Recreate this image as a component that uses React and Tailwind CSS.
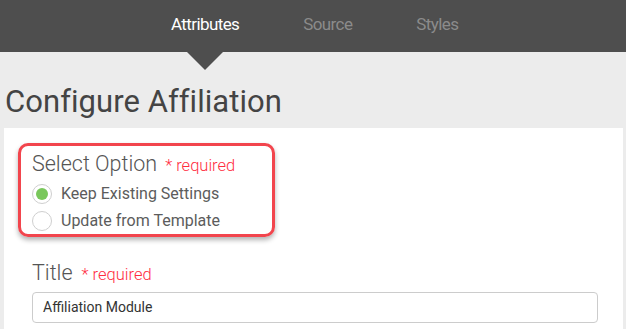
import React from "react";

const font = { fontFamily: "Roboto, 'Liberation Sans', sans-serif" };

const Radio = ({ checked, label }) => (
  <div className="flex items-center h-[27px]">
    <span className="flex h-[20px] w-[20px] items-center justify-center rounded-full border border-[#cfcfcf] bg-white">
      {checked && <span className="h-[12px] w-[12px] rounded-full bg-[#79c75b]" />}
    </span>
    <span className="ml-[9px] text-[16px] text-[#5c5c5c]">{label}</span>
  </div>
);

const App = () => {
  return (
    <div className="h-[329px] w-full overflow-hidden bg-[#ececec]" style={font}>
      <div className="relative h-[52px] bg-[#4e4e4e]">
        <nav className="flex h-full items-center gap-[64px] pl-[171px] pb-[2px] text-[17px] tracking-[-0.6px]">
          <span className="text-white">Attributes</span>
          <span className="text-[#8b8b8b]">Source</span>
          <span className="text-[#8b8b8b]">Styles</span>
        </nav>
        <div className="absolute left-[187px] top-[52px] h-0 w-0 border-l-[18px] border-r-[18px] border-t-[18px] border-l-transparent border-r-transparent border-t-[#4e4e4e]" />
      </div>

      <h1 className="pl-[5px] pt-[34px] text-[31px] leading-none font-normal tracking-[0.05px] text-[#444]">
        Configure Affiliation
      </h1>

      <div className="mt-[11px] ml-[4px] mr-[3px] h-[300px] bg-white pt-[15px]">
        <div className="ml-[14px] h-[94px] w-[257px] rounded-[10px] border-[3px] border-[#f2454d] pl-[11px] pt-[2px] shadow-[0_3px_5px_rgba(0,0,0,0.3)]">
          <div className="flex items-baseline">
            <span className="text-[21.5px] font-light text-[#555]">Select Option</span>
            <span className="ml-[8px] text-[16.5px] font-light text-[#ff2d3f]">* required</span>
          </div>
          <div>
            <Radio checked label="Keep Existing Settings" />
            <Radio label="Update from Template" />
          </div>
        </div>

        <div className="ml-[28px] mr-[25px] mt-[20px]">
          <div className="flex items-baseline">
            <span className="text-[21.5px] font-light text-[#555]">Title</span>
            <span className="ml-[9px] text-[16.5px] font-light text-[#ff2d3f]">* required</span>
          </div>
          <div className="mt-[3px] flex h-[31px] items-center rounded-[4px] border border-[#cccccc] pl-[10px] text-[14px] text-[#333]">
            Affiliation Module
          </div>
        </div>
      </div>
    </div>
  );
};

export default App;
